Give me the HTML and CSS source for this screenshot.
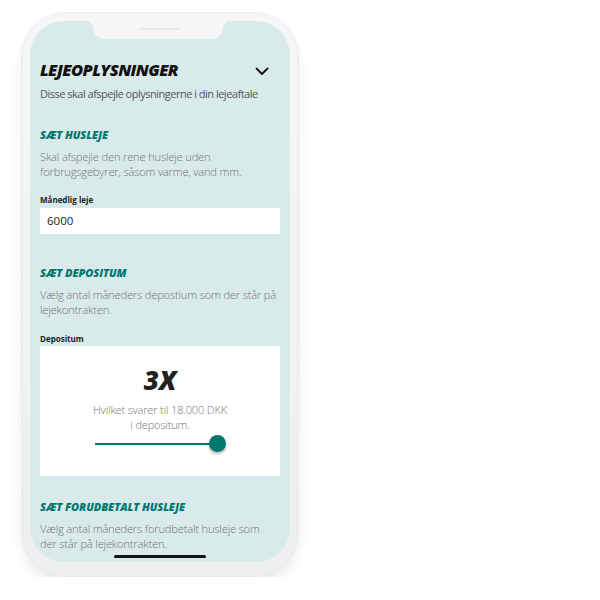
FILE: index.html
```html
<!DOCTYPE html>
<html lang="da">
<head>
<meta charset="utf-8">
<link rel="stylesheet" href="styles.css">
</head>
<body>
<div class="phone">
  <div class="screen">
    <div class="notch"><span class="speaker"></span></div>
    <div class="content">
      <div class="head">
        <h1 class="title">LEJEOPLYSNINGER</h1>
        <svg class="chev" width="14" height="9" viewBox="0 0 14 9"><path d="M1.5 1.5 L7 7 L12.5 1.5" fill="none" stroke="#111" stroke-width="1.8" stroke-linecap="round" stroke-linejoin="round"/></svg>
      </div>
      <p class="sub">Disse skal afspejle oplysningerne i din lejeaftale</p>

      <h2 class="sec sec-first">SÆT HUSLEJE</h2>
      <p class="desc">Skal afspejle den rene husleje uden forbrugsgebyrer, såsom varme, vand mm.</p>
      <div class="label">Månedlig leje</div>
      <div class="input">6000</div>

      <h2 class="sec sec-after-input">SÆT DEPOSITUM</h2>
      <p class="desc">Vælg antal måneders depostium som der står på lejekontrakten.</p>
      <div class="label label-card">Depositum</div>
      <div class="card">
        <div class="big">3X</div>
        <div class="cardtext">Hvilket svarer til 18.000 DKK<br>i depositum.</div>
        <div class="slider"><span class="track"></span><span class="thumb"></span></div>
      </div>

      <h2 class="sec sec-after-card">SÆT FORUDBETALT HUSLEJE</h2>
      <p class="desc desc-narrow">Vælg antal måneders forudbetalt husleje som der står på lejekontrakten.</p>
    </div>
    <div class="home"></div>
  </div>
</div>
</body>
</html>
```
FILE: styles.css
```css
html, body { margin: 0; padding: 0; background: #fff; }
body { font-family: "Open Sans", "Noto Sans", sans-serif; }

.phone {
  margin: 13px 0 0 22px;
  width: 260px;
  height: 541px;
  padding: 8px 8px 15px 8px;
  border-radius: 44px;
  background: linear-gradient(#f7f7f7, #efefef);
  box-shadow: 0 0 0 1px #ececec, 0 8px 14px rgba(0,0,0,0.08), inset 0 0 3px rgba(0,0,0,0.06);
}
.screen {
  position: relative;
  height: 100%;
  overflow: hidden;
  border-radius: 34px;
  background: #d9eaea;
}
.notch {
  position: absolute;
  top: 0;
  left: 63px;
  width: 130px;
  height: 18px;
  background: #f6f6f6;
  border-radius: 0 0 12px 12px;
}
.notch::before, .notch::after {
  content: "";
  position: absolute;
  top: 0;
  width: 8px;
  height: 8px;
}
.notch::before { left: -8px; background: radial-gradient(circle at 0 100%, transparent 8px, #f6f6f6 8.5px); }
.notch::after { right: -8px; background: radial-gradient(circle at 100% 100%, transparent 8px, #f6f6f6 8.5px); }
.speaker {
  position: absolute;
  left: 45px;
  top: 7px;
  width: 42px;
  height: 2px;
  border-radius: 1px;
  background: #e6eaea;
}
.content { padding: 37px 10px 0 10px; }
.head { display: flex; align-items: center; justify-content: space-between; }
.title {
  margin: 0;
  font-size: 16.5px;
  line-height: 24px;
  font-weight: 800;
  font-style: italic;
  letter-spacing: -0.6px;
  color: #111;
}
.chev { margin-right: 11px; margin-top: 2px; }
.sub {
  margin: 4px 0 0 0;
  font-size: 11px;
  line-height: 16px;
  letter-spacing: -0.5px;
  color: #555;
}
.sec {
  margin: 0;
  font-size: 11px;
  line-height: 16px;
  font-weight: 800;
  font-style: italic;
  letter-spacing: -0.1px;
  color: #00776f;
}
.sec-first { margin-top: 25px; }
.sec-after-input { margin-top: 31px; }
.sec-after-card { margin-top: 23px; }
.desc {
  margin: 6px 0 0 0;
  max-width: 239px;
  font-size: 11.2px;
  line-height: 15px;
  font-weight: 300;
  letter-spacing: -0.2px;
  color: #747474;
}
.desc-narrow { max-width: 230px; }
.label {
  margin-top: 15px;
  font-size: 8px;
  line-height: 12px;
  font-weight: 700;
  color: #222;
}
.label-card { margin-top: 16px; }
.input {
  margin-top: 2px;
  height: 26px;
  line-height: 26px;
  padding-left: 7px;
  background: #fff;
  font-size: 11.5px;
  color: #222;
}
.card {
  margin-top: 1px;
  height: 130px;
  background: #fff;
  display: flex;
  flex-direction: column;
  align-items: center;
}
.big {
  margin-top: 17px;
  font-size: 26px;
  line-height: 34px;
  font-weight: 800;
  font-style: italic;
  color: #222;
}
.cardtext {
  margin-top: 5px;
  font-size: 11px;
  line-height: 15px;
  font-weight: 300;
  letter-spacing: -0.15px;
  color: #747474;
  text-align: center;
}
.slider {
  position: relative;
  margin-top: 3px;
  width: 130px;
  height: 18px;
  display: flex;
  align-items: center;
}
.track { width: 122px; height: 2px; background: #00776f; }
.thumb {
  position: absolute;
  right: -1px;
  top: 0;
  width: 17px;
  height: 17px;
  border-radius: 50%;
  background: #00776f;
  box-shadow: 0 2px 3px rgba(0,0,0,0.3);
}
.home {
  position: absolute;
  left: 84px;
  bottom: 4px;
  width: 92px;
  height: 3px;
  border-radius: 2px;
  background: #111;
}
```
